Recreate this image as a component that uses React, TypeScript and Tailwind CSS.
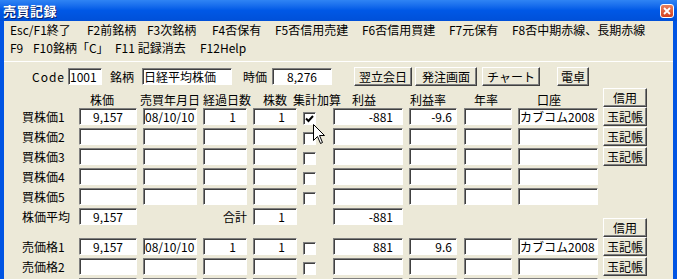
import React from "react";

const font = "font-['MS_UI_Gothic','Noto_Sans_CJK_JP',sans-serif]";

const sunken =
  "h-[17px] bg-white border border-t-[#808080] border-l-[#808080] border-r-white border-b-white shadow-[inset_1px_1px_0_#404040] text-[12px] leading-[15px] whitespace-nowrap overflow-hidden text-black";

const raised =
  "h-[19px] bg-[#ece9d8] border border-t-white border-l-white border-r-[#404040] border-b-[#404040] shadow-[inset_-1px_-1px_0_#808080] text-[12px] leading-[17px] text-center whitespace-nowrap text-black";

const menu1 = [
  { label: "Esc/F1終了", w: "w-[77px]" },
  { label: "F2前銘柄", w: "w-[60px]" },
  { label: "F3次銘柄", w: "w-[65px]" },
  { label: "F4否保有", w: "w-[63px]" },
  { label: "F5否信用売建", w: "w-[87px]" },
  { label: "F6否信用買建", w: "w-[87px]" },
  { label: "F7元保有", w: "w-[63px]" },
  { label: "F8否中期赤線、長期赤線", w: "" },
];

const menu2 = [
  { label: "F9", w: "w-[23px]" },
  { label: "F10銘柄「C」", w: "w-[82px]" },
  { label: "F11 記録消去", w: "w-[85px]" },
  { label: "F12Help", w: "" },
];

const headers = [
  { label: "株価", w: "w-[50px]" },
  { label: "売買年月日", w: "w-[63px]" },
  { label: "経過日数", w: "w-[60px]" },
  { label: "株数", w: "w-[30px]" },
  { label: "集計加算", w: "w-[59px]" },
  { label: "利益", w: "w-[58px]" },
  { label: "利益率", w: "w-[64px]" },
  { label: "年率", w: "w-[63px]" },
  { label: "口座", w: "w-[66px]" },
];

type Row = {
  label: string;
  price?: string;
  date?: string;
  days?: string;
  qty?: string;
  checked?: boolean;
  profit?: string;
  rate?: string;
  acct?: string;
  btn?: boolean;
};

const buyRows: Row[] = [
  { label: "買株価1", price: "9,157", date: "08/10/10", days: "1", qty: "1", checked: true, profit: "-881", rate: "-9.6", acct: "カブコム2008", btn: true },
  { label: "買株価2", btn: true },
  { label: "買株価3", btn: true },
  { label: "買株価4" },
  { label: "買株価5" },
];

// third sell row is cut by the window edge, only its field tops show
const sellRows: Row[] = [
  { label: "売価格1", price: "9,157", date: "08/10/10", days: "1", qty: "1", profit: "881", rate: "9.6", acct: "カブコム2008", btn: true },
  { label: "売価格2", btn: true },
  { label: "" },
];

function CheckBox({ checked }: { checked?: boolean }) {
  return (
    <div className="ml-[6px] mt-[5px] w-[13px] h-[13px] bg-white border border-t-[#808080] border-l-[#808080] border-r-white border-b-white shadow-[inset_1px_1px_0_#404040] flex items-center justify-center">
      {checked && (
        <svg width="9" height="8" viewBox="0 0 9 8">
          <path d="M1 3.5 L3.5 6 L8 1" fill="none" stroke="#000" strokeWidth="2" />
        </svg>
      )}
    </div>
  );
}

function DataRow({ row }: { row: Row }) {
  return (
    <div className="flex h-[20px] items-start">
      <div className="w-[57px] h-[20px] leading-[20px] text-[12px]">{row.label}</div>
      <div className={`${sunken} mt-[1px] w-[58px] text-right pr-[13px]`}>{row.price}</div>
      <div className={`${sunken} mt-[1px] ml-[6px] w-[54px] pl-[1px]`}>{row.date}</div>
      <div className={`${sunken} mt-[1px] ml-[6px] w-[44px] text-right pr-[10px]`}>{row.days}</div>
      <div className={`${sunken} mt-[1px] ml-[6px] w-[44px] text-right pr-[11px]`}>{row.qty}</div>
      <CheckBox checked={row.checked} />
      <div className={`${sunken} mt-[1px] ml-[17px] w-[70px] text-right pr-[9px]`}>{row.profit}</div>
      <div className={`${sunken} mt-[1px] ml-[6px] w-[48px] text-right pr-[4px]`}>{row.rate}</div>
      <div className={`${sunken} mt-[1px] ml-[7px] w-[48px]`}></div>
      <div className={`${sunken} mt-[1px] ml-[6px] w-[80px] pl-[1px]`}>{row.acct}</div>
      {row.btn && <div className={`${raised} ml-[5px] w-[44px]`}>玉記帳</div>}
    </div>
  );
}

export default function App() {
  return (
    <div className={`relative w-[677px] h-[279px] overflow-hidden bg-[#0054e3] text-black ${font}`}>
      {/* Title bar */}
      <div className="h-[21px] flex items-center justify-between bg-gradient-to-b from-[#2f84f4] via-[#0058e6] to-[#0050d8]">
        <span className="pl-[3px] text-[13px] font-bold text-white tracking-[0.5px] [text-shadow:1px_1px_0_#0a246a]">売買記録</span>
        <div className="mr-[3px] w-[14px] h-[14px] rounded-[3px] border border-white bg-gradient-to-b from-[#e8805e] to-[#d4401c] flex items-center justify-center">
          <svg width="8" height="8" viewBox="0 0 8 8">
            <path d="M1 1 L7 7 M7 1 L1 7" stroke="#fff" strokeWidth="1.8" />
          </svg>
        </div>
      </div>

      {/* Window body */}
      <div className="mx-[4px] bg-[#ece9d8] h-[279px]">
        {/* Menu */}
        <div className="pl-[6px] text-[12px]">
          <div className="flex h-[18px] leading-[18px]">
            {menu1.map((m) => (
              <span key={m.label} className={`${m.w} whitespace-nowrap`}>{m.label}</span>
            ))}
          </div>
          <div className="flex h-[18px] leading-[18px]">
            {menu2.map((m) => (
              <span key={m.label} className={`${m.w} whitespace-nowrap`}>{m.label}</span>
            ))}
          </div>
        </div>
        <div className="mt-[4px] h-[1px] bg-white"></div>

        {/* Code row */}
        <div className="mt-[4px] h-[21px] flex items-center pl-[28px] text-[12px]">
          <span className="w-[36px] tracking-[1px]">Code</span>
          <div className={`${sunken} w-[34px] pl-[1px]`}>1001</div>
          <span className="w-[40px] pl-[8px]">銘柄</span>
          <div className={`${sunken} w-[90px] pl-[1px]`}>日経平均株価</div>
          <span className="w-[40px] pl-[11px]">時価</span>
          <div className={`${sunken} w-[60px] text-center`}>8,276</div>
          <div className={`${raised} ml-[22px] w-[58px]`}>翌立会日</div>
          <div className={`${raised} ml-[3px] w-[62px]`}>発注画面</div>
          <div className={`${raised} ml-[5px] w-[58px]`}>チャート</div>
          <div className={`${raised} ml-[17px] w-[32px]`}>電卓</div>
        </div>

        {/* Header row */}
        <div className="h-[20px] flex items-start pl-[86px] text-[12px]">
          {headers.map((h) => (
            <span key={h.label} className={`${h.w} h-[20px] leading-[26px] whitespace-nowrap`}>{h.label}</span>
          ))}
          <div className={`${raised} mt-[1px] h-[18px] leading-[16px] w-[44px]`}>信用</div>
        </div>

        {/* Rows */}
        <div className="pl-[18px] text-[12px]">
          {buyRows.map((r) => (
            <DataRow key={r.label} row={r} />
          ))}

          {/* Average row */}
          <div className="flex h-[30px] items-start">
            <div className="w-[57px] h-[20px] leading-[20px]">株価平均</div>
            <div className={`${sunken} mt-[1px] w-[58px] text-right pr-[13px]`}>9,157</div>
            <div className="ml-[6px] w-[110px] h-[20px] leading-[20px] text-right pr-[6px]">合計</div>
            <div className={`${sunken} mt-[1px] w-[44px] text-right pr-[11px]`}>1</div>
            <div className={`${sunken} mt-[1px] ml-[36px] w-[70px] text-right pr-[9px]`}>-881</div>
            <div className={`${raised} mt-[11px] h-[18px] leading-[16px] ml-[200px] w-[44px]`}>信用</div>
          </div>

          {sellRows.map((r, i) => (
            <DataRow key={i} row={r} />
          ))}
        </div>
      </div>

      {/* Mouse cursor */}
      <svg className="absolute left-[313px] top-[124px]" width="13" height="21" viewBox="0 0 13 21">
        <path d="M0.5 0.5 L0.5 16.5 L4.5 12.5 L7.5 19.5 L9.5 18.5 L6.5 11.5 L11.5 11.5 Z" fill="#fff" stroke="#000" strokeWidth="1" />
      </svg>
    </div>
  );
}
